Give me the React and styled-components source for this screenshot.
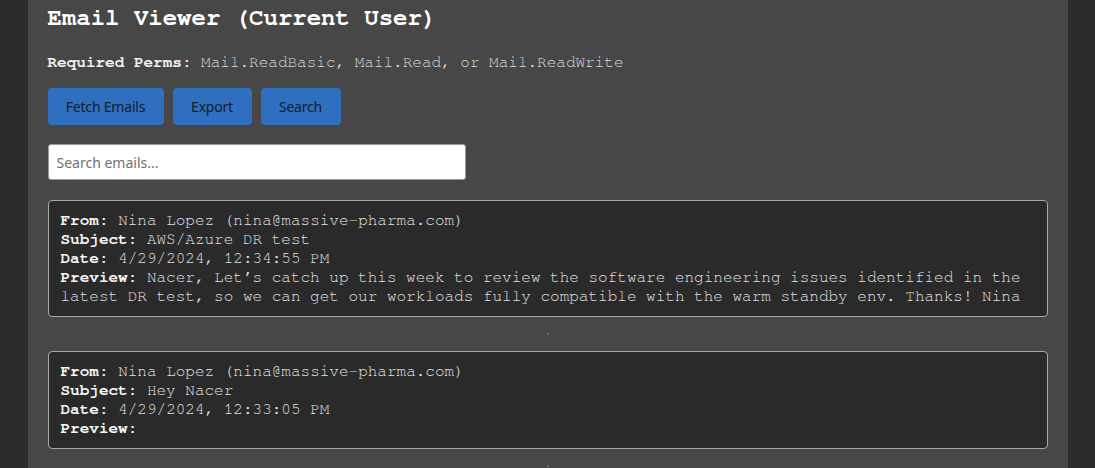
import React from 'react'
import styled, { createGlobalStyle } from 'styled-components'

// page defaults
const GlobalStyle = createGlobalStyle`
    html, body {
        margin: 0;
        padding: 0;
        background-color: #2b2b2b;
        overflow: hidden;
    }
`

const emails = [
    {
        from: 'Nina Lopez (nina@massive-pharma.com)',
        subject: 'AWS/Azure DR test',
        date: '4/29/2024, 12:34:55 PM',
        preview: 'Nacer, Let\u2019s catch up this week to review the software engineering issues identified in the latest DR test, so we can get our workloads fully compatible with the warm standby env. Thanks! Nina'
    },
    {
        from: 'Nina Lopez (nina@massive-pharma.com)',
        subject: 'Hey Nacer',
        date: '4/29/2024, 12:33:05 PM',
        preview: ''
    }
]

export default class App extends React.Component {
    render() {
        return (
            <Page>
                <GlobalStyle />
                <Panel>
                    <Title>Email Viewer (Current User)</Title>
                    <Perms><b>Required Perms:</b> Mail.ReadBasic, Mail.Read, or Mail.ReadWrite</Perms>
                    <ButtonRow>
                        <ActionButton $width={116}>Fetch Emails</ActionButton>
                        <ActionButton $width={79}>Export</ActionButton>
                        <ActionButton $width={80}>Search</ActionButton>
                    </ButtonRow>
                    <SearchInput placeholder="Search emails..." />
                    <EmailList>
                        {emails.map((mail, i) => (
                            <React.Fragment key={i}>
                                <EmailCard>
                                    <Line><Label>From:</Label> {mail.from}</Line>
                                    <Line><Label>Subject:</Label> {mail.subject}</Line>
                                    <Line><Label>Date:</Label> {mail.date}</Line>
                                    <Line><Label>Preview:</Label> {mail.preview}</Line>
                                </EmailCard>
                                <Divider />
                            </React.Fragment>
                        ))}
                    </EmailList>
                </Panel>
            </Page>
        )
    }
}

const Page = styled.div `
    min-height: 468px;
    background-color: #2b2b2b;
`
const Panel = styled.div `
    width: 1040px;
    margin: 0 auto;
    min-height: 468px;
    box-sizing: border-box;
    padding: 4px 20px 0;
    background-color: #474747;
    font-family: "Nimbus Mono PS", "FreeMono", "Courier", "Courier New", "Liberation Mono", monospace;
    color: #ffffff;
`
const Title = styled.h2 `
    margin: 0;
    font-size: 24px;
    line-height: 28px;
    font-weight: bold;
    color: #ffffff;
`
const Perms = styled.p `
    margin: 20px 0 0;
    font-size: 16px;
    line-height: 20px;
    color: #d8d8d8;
    b {
        color: #f2f2f2;
    }
`
const ButtonRow = styled.div `
    display: flex;
    gap: 9px;
    margin-top: 16px;
`
const ActionButton = styled.button `
    width: ${props => props.$width}px;
    height: 37px;
    margin: 0;
    padding: 0;
    border: none;
    border-radius: 4px;
    background-color: #2f6fc0;
    color: #141c2c;
    font-family: "Noto Sans", sans-serif;
    font-size: 14px;
    letter-spacing: -0.2px;
    cursor: pointer;
`
const SearchInput = styled.input `
    display: block;
    width: 400px;
    box-sizing: content-box;
    height: 18px;
    padding: 8px;
    margin-top: 19px;
    border: 1px solid #9a9a9a;
    border-radius: 3px;
    background-color: #ffffff;
    font-family: "Noto Sans", sans-serif;
    font-size: 14px;
    outline: none;
    &::placeholder {
        color: #707070;
    }
`
const EmailList = styled.div `
    margin-top: 20px;
    display: flex;
    flex-direction: column;
`
const EmailCard = styled.div `
    border: 1px solid #a8a8a8;
    border-radius: 4px;
    padding: 10px 12px;
    background-color: #2a2a2a;
    font-size: 16px;
    line-height: 19px;
    color: #e0e0e0;
`
const Line = styled.div `
    white-space: pre-wrap;
`
const Label = styled.b `
    color: #f6f6f6;
`
const Divider = styled.div `
    align-self: center;
    width: 2px;
    height: 2px;
    margin: 16px 0;
    background-color: #6a6a6a;
`
